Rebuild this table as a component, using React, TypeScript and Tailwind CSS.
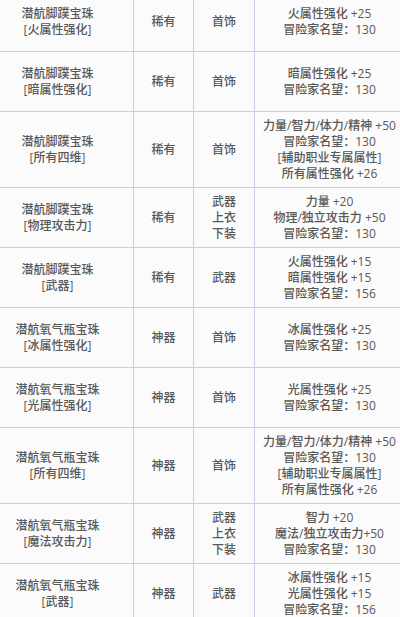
import React from 'react';

interface Row {
  name: string;
  sub: string;
  grade: string;
  slots: string[];
  stats: string[];
}

const rows: Row[] = [
  { name: '潜航脚蹼宝珠', sub: '[火属性强化]', grade: '稀有', slots: ['首饰'], stats: ['火属性强化 +25', '冒险家名望：130'] },
  { name: '潜航脚蹼宝珠', sub: '[暗属性强化]', grade: '稀有', slots: ['首饰'], stats: ['暗属性强化 +25', '冒险家名望：130'] },
  {
    name: '潜航脚蹼宝珠',
    sub: '[所有四维]',
    grade: '稀有',
    slots: ['首饰'],
    stats: ['力量/智力/体力/精神 +50', '冒险家名望：130', '[辅助职业专属属性]', '所有属性强化 +26'],
  },
  {
    name: '潜航脚蹼宝珠',
    sub: '[物理攻击力]',
    grade: '稀有',
    slots: ['武器', '上衣', '下装'],
    stats: ['力量 +20', '物理/独立攻击力 +50', '冒险家名望：130'],
  },
  {
    name: '潜航脚蹼宝珠',
    sub: '[武器]',
    grade: '稀有',
    slots: ['武器'],
    stats: ['火属性强化 +15', '暗属性强化 +15', '冒险家名望：156'],
  },
  { name: '潜航氧气瓶宝珠', sub: '[冰属性强化]', grade: '神器', slots: ['首饰'], stats: ['冰属性强化 +25', '冒险家名望：130'] },
  { name: '潜航氧气瓶宝珠', sub: '[光属性强化]', grade: '神器', slots: ['首饰'], stats: ['光属性强化 +25', '冒险家名望：130'] },
  {
    name: '潜航氧气瓶宝珠',
    sub: '[所有四维]',
    grade: '神器',
    slots: ['首饰'],
    stats: ['力量/智力/体力/精神 +50', '冒险家名望：130', '[辅助职业专属属性]', '所有属性强化 +26'],
  },
  {
    name: '潜航氧气瓶宝珠',
    sub: '[魔法攻击力]',
    grade: '神器',
    slots: ['武器', '上衣', '下装'],
    stats: ['智力 +20', '魔法/独立攻击力+50', '冒险家名望：130'],
  },
  {
    name: '潜航氧气瓶宝珠',
    sub: '[武器]',
    grade: '神器',
    slots: ['武器'],
    stats: ['冰属性强化 +15', '光属性强化 +15', '冒险家名望：156'],
  },
];

const cell = 'border border-[#c6cfe2] text-center align-middle px-1 py-[5.5px]';

export default function App() {
  return (
    <div
      className="w-[400px] h-[617px] overflow-hidden bg-[#fbfbfb]"
      style={{ fontFamily: '"Open Sans", "Noto Sans CJK SC", sans-serif' }}
    >
      <table className="-mt-[9px] -ml-[19px] border-collapse table-fixed w-[423px] text-[12px] leading-[16px] font-medium text-[#585858]">
        <colgroup>
          <col className="w-[152px]" />
          <col className="w-[60px]" />
          <col className="w-[61px]" />
          <col className="w-[150px]" />
        </colgroup>
        <tbody>
          {rows.map((r, i) => (
            <tr key={i} className="h-[60px]">
              <td className={cell}>
                <div>{r.name}</div>
                <div>{r.sub}</div>
              </td>
              <td className={cell}>{r.grade}</td>
              <td className={cell}>
                {r.slots.map((s) => (
                  <div key={s}>{s}</div>
                ))}
              </td>
              <td className={`${cell} whitespace-nowrap`}>
                {r.stats.map((s, j) => (
                  <div key={j}>{s}</div>
                ))}
              </td>
            </tr>
          ))}
        </tbody>
      </table>
    </div>
  );
}
